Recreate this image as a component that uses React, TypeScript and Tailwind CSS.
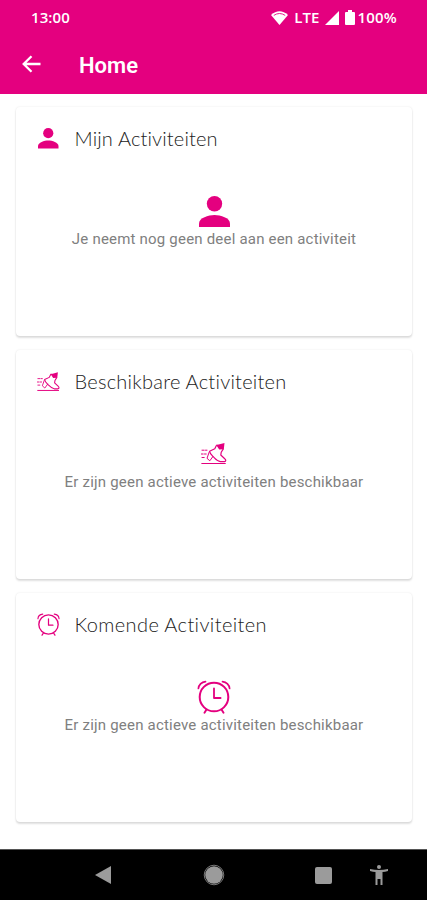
import type { ReactNode } from 'react';

type IconProps = { className?: string };

function PersonIcon({ className }: IconProps) {
  return (
    <svg viewBox="0 0 31 31" className={className} fill="currentColor">
      <circle cx="15.5" cy="7.8" r="7.7" />
      <path d="M0 31v-3.6C0 22 9.5 19 15.5 19S31 22 31 27.4V31z" />
    </svg>
  );
}

function ShoeIcon({ className }: IconProps) {
  return (
    <svg viewBox="0 0 27 22" className={className} fill="none" stroke="currentColor" strokeLinecap="round" strokeLinejoin="round">
      <path d="m15 1.8 2.600-.2L23.500 0l-.7 6.200-4.600.4z" fill="currentColor" stroke="none" />
      <path d="M15.400 2.600 13.800 5.800 8.600 8.200c.2 2.500 2 3.900 4.100 6 2.300 2.300 3.900 4.200 6.600 4.500h4.200c1.600-.2 1.500-1.800.5-2.700L19.800 12l.4-2.700 2-3.200" strokeWidth="1.2" />
      <path d="M8.300 8.800 6 15.300l2.800 2.500 3.200-4.400" strokeWidth="1" />
      <path d="M1 7.200h5M0 11h5.200M1 14.500h3" strokeWidth="1" strokeDasharray="2.2 1.3" />
      <path d="M.8 20.5h23.500" strokeWidth="1.1" />
    </svg>
  );
}

function AlarmIcon({ className }: IconProps) {
  return (
    <svg viewBox="0 0 34 34" className={className} fill="none" stroke="currentColor" strokeLinecap="round" strokeLinejoin="round">
      <circle cx="17" cy="17" r="14.3" strokeWidth="2" />
      <path d="M17 8.5V18h6.6" strokeWidth="1.8" />
      <path d="M1.4 8.5C1.6 5 4.5 2 8.5 1.6M32.6 8.5C32.4 5 29.5 2 25.5 1.6" strokeWidth="1.7" />
      <path d="m9.5 29.6-2 3.2M24.5 29.6l2 3.2" strokeWidth="1.9" />
    </svg>
  );
}

type Section = {
  title: string;
  message: string;
  titleClass: string;
  icon: ReactNode;
  largeIcon: ReactNode;
};

const sections: Section[] = [
  {
    title: 'Mijn Activiteiten',
    message: 'Je neemt nog geen deel aan een activiteit',
    titleClass: 'tracking-[0.15px]',
    icon: <PersonIcon className="size-[20.5px]" />,
    largeIcon: <PersonIcon className="size-[31px]" />
  },
  {
    title: 'Beschikbare Activiteiten',
    message: 'Er zijn geen actieve activiteiten beschikbaar',
    titleClass: 'tracking-[0.24px]',
    icon: <ShoeIcon className="h-[20px] w-[24px]" />,
    largeIcon: <ShoeIcon className="h-[22px] w-[27px]" />
  },
  {
    title: 'Komende Activiteiten',
    message: 'Er zijn geen actieve activiteiten beschikbaar',
    titleClass: 'tracking-[0.38px]',
    icon: <AlarmIcon className="size-[23px]" />,
    largeIcon: <AlarmIcon className="size-[34px]" />
  }
];

function StatusBar() {
  return (
    <div className="flex h-[35px] items-center justify-between pr-[30px] pl-[31px] font-['Open_Sans',sans-serif] text-[15px] font-semibold">
      <span className="tracking-[0.1px]">13:00</span>
      <div className="flex items-center">
        <svg viewBox="0 0 17 14" className="h-[14px] w-[17px]">
          <path d="M0 4Q8.5-3.500 17 4L8.5 14z" fill="currentColor" />
          <path d="M2.8 4.4Q8.5.6 14.2 4.4" stroke="#e4007f" strokeWidth=".9" fill="none" />
        </svg>
        <span className="ml-[6px] tracking-[0.1px]">LTE</span>
        <svg viewBox="0 0 14 14" className="ml-[5px] size-[14px]">
          <path d="M0 14 14 0v14z" fill="currentColor" />
        </svg>
        <svg viewBox="0 0 10 15" className="ml-[6px] h-[15px] w-[10px]">
          <path d="M3 0h4v2h2q1 0 1 1v11q0 1-1 1H1q-1 0-1-1V3q0-1 1-1h2z" fill="currentColor" />
        </svg>
        <span className="ml-[3px] tracking-[0.2px]">100%</span>
      </div>
    </div>
  );
}

function ActivityCard({ section }: { section: Section }) {
  return (
    <section className="h-[229px] rounded-[4px] bg-white shadow-[0_2px_2px_rgba(0,0,0,0.12),0_0_2px_rgba(0,0,0,0.10)]">
      <div className="flex h-[61px] items-center pl-[20.5px]">
        <div className="flex w-[24px] justify-center pt-[2px] text-[#e4007f]">{section.icon}</div>
        <h2 className={`ml-[14px] font-['Lato',sans-serif] text-[20px] font-light whitespace-nowrap text-[#222] ${section.titleClass}`}>
          {section.title}
        </h2>
      </div>
      <div className="flex flex-col items-center">
        <div className="mt-[25px] flex h-[36px] items-center text-[#e4007f]">{section.largeIcon}</div>
        <p className="font-['Roboto',sans-serif] text-[15px] leading-[20px] tracking-[0.2px] whitespace-nowrap text-[#808080]">
          {section.message}
        </p>
      </div>
    </section>
  );
}

function NavigationBar() {
  return (
    <nav className="flex h-[51px] items-center border-t border-[#555] bg-black text-[#9b9b9b]">
      <svg viewBox="0 0 16 18" className="ml-[95px] h-[18px] w-[16px]">
        <path d="M16 0v18L0 9z" fill="currentColor" />
      </svg>
      <svg viewBox="0 0 22 22" className="ml-[92px] size-[22px]">
        <circle cx="11" cy="11" r="9.8" stroke="#777" strokeWidth="1" fill="none" />
        <circle cx="11" cy="11" r="8.8" fill="currentColor" />
      </svg>
      <div className="ml-[90px] size-[17px] rounded-[2px] bg-current" />
      <svg viewBox="0 0 18 20" className="ml-[38px] h-[20px] w-[18px]" fill="currentColor">
        <circle cx="9" cy="2" r="2" />
        <path d="M0 4q9 2 18 0v2q-3 .8-5.500 1v13h-2v-6h-3v6h-2V7Q3 6.800 0 6z" />
      </svg>
    </nav>
  );
}

export default function App() {
  return (
    <div className="flex h-[900px] w-[427px] flex-col overflow-hidden bg-white">
      <header className="h-[94px] shrink-0 bg-[#e4007f] text-white">
        <StatusBar />
        <div className="flex h-[58px] items-center pl-[22px]">
          <svg viewBox="0 0 19 18" className="h-[18px] w-[19px]" fill="none" stroke="currentColor" strokeWidth="2.3">
            <path d="M18.5 9H2M9.5 1.200 1.700 9l7.800 7.800" />
          </svg>
          <h1 className="ml-[38px] pt-[2px] font-['Roboto',sans-serif] text-[22px] font-semibold">Home</h1>
        </div>
      </header>
      <main className="flex flex-1 flex-col gap-[14px] pt-[13px] pr-[15px] pl-[16px]">
        {sections.map((section) => (
          <ActivityCard key={section.title} section={section} />
        ))}
      </main>
      <NavigationBar />
    </div>
  );
}
